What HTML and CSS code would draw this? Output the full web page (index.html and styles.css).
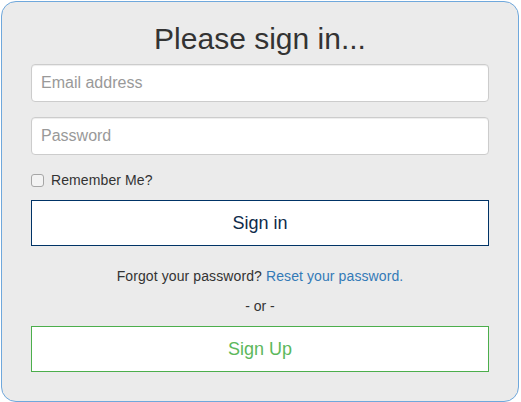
FILE: index.html
```html
<!DOCTYPE html>
<html>
<head>
<meta charset="utf-8">
<link rel="stylesheet" href="styles.css">
</head>
<body>
<div class="panel">
  <h2 class="title">Please sign in...</h2>
  <input class="field" type="email" placeholder="Email address">
  <input class="field pw" type="password" placeholder="Password">
  <label class="remember"><input type="checkbox" class="check"> Remember Me?</label>
  <button class="btn btn-signin">Sign in</button>
  <p class="forgot">Forgot your password? <a href="#">Reset your password.</a></p>
  <p class="or">- or -</p>
  <button class="btn btn-signup">Sign Up</button>
</div>
</body>
</html>
```
FILE: styles.css
```css
* { box-sizing: border-box; }
html, body { margin: 0; padding: 0; background: #fff; }
body {
  font-family: "Liberation Sans", Arial, sans-serif;
  font-size: 14px;
  color: #333;
}
.panel {
  margin: 1px 2px 1px 1px;
  height: 401px;
  border: 1px solid #6fa8dc;
  border-radius: 15px;
  background: #ebebeb;
  padding: 20px 29px 29px;
  display: flex;
  flex-direction: column;
}
.title {
  margin: 0 0 9px;
  font-size: 30px;
  font-weight: normal;
  line-height: 33px;
  text-align: center;
  color: #333;
}
.field {
  display: block;
  width: 100%;
  height: 38px;
  margin: 0 0 15px;
  padding: 6px 9px;
  font-family: inherit;
  font-size: 16px;
  color: #555;
  background: #fff;
  border: 1px solid #ccc;
  border-radius: 4px;
  box-shadow: inset 0 1px 1px rgba(0,0,0,.075);
}
.field::placeholder { color: #999; }
.remember {
  display: flex;
  align-items: center;
  height: 20px;
  line-height: 20px;
  margin-bottom: 10px;
  font-size: 14px;
  letter-spacing: 0.1px;
}
.check {
  appearance: none;
  -webkit-appearance: none;
  width: 13px;
  height: 13px;
  margin: 0 7px 0 0;
  border: 1px solid #a6a6a6;
  border-radius: 3px;
  background: #f3f3f3;
}
.btn {
  display: block;
  width: 100%;
  height: 46px;
  background: #fff;
  font-family: inherit;
  font-size: 18px;
  border-radius: 0;
  padding: 0;
}
.btn-signin {
  border: 1px solid #003366;
  color: #0d2a4a;
}
.btn-signup {
  border: 1px solid #4cae4c;
  color: #5cb85c;
}
.forgot {
  margin: 20px 0 10px;
  line-height: 20px;
  text-align: center;
  letter-spacing: 0.1px;
}
.forgot a { color: #337ab7; text-decoration: none; }
.or {
  margin: 0 0 10px;
  line-height: 20px;
  text-align: center;
}
```
